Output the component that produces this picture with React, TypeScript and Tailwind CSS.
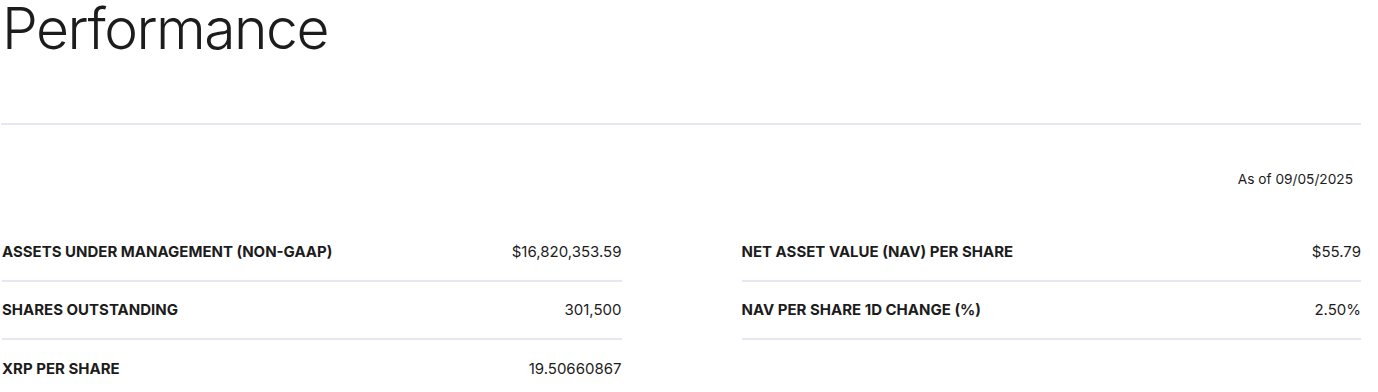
import React from "react";

const left = [
  ["ASSETS UNDER MANAGEMENT (NON-GAAP)", "$16,820,353.59"],
  ["SHARES OUTSTANDING", "301,500"],
  ["XRP PER SHARE", "19.50660867"],
];
const right = [
  ["NET ASSET VALUE (NAV) PER SHARE", "$55.79"],
  ["NAV PER SHARE 1D CHANGE (%)", "2.50%"],
];

function Row({ label, value, last }: { label: string; value: string; last?: boolean }) {
  return (
    <div
      className={
        "flex h-[58px] items-center justify-between " +
        (last ? "" : "border-b-2 border-[#e8e7f1]")
      }
    >
      <span className="text-[15px] font-bold text-[#1c1c1c]">{label}</span>
      <span className="text-[15px] font-normal text-[#1c1c1c]">{value}</span>
    </div>
  );
}

export default function App() {
  return (
    <div
      className="w-[1378px] h-[392px] overflow-hidden bg-white pl-[2px] pr-[17px]"
      style={{ fontFamily: "Inter, 'Noto Sans', sans-serif" }}
    >
      <h1 className="text-[57px] font-light leading-[58px] tracking-[-1.5px] text-[#1c1c1c]">
        Performance
      </h1>
      <div className="mt-[65px] h-[2px] bg-[#e8e7f1] -ml-[1px]" />
      <div className="mt-[44px] flex justify-end pr-[8px] text-[13.7px] leading-[20px] text-[#1c1c1c]">
        As of 09/05/2025
      </div>
      <div className="mt-[35px] grid grid-cols-2 gap-x-[120px]">
        <div className="flex flex-col">
          {left.map((r, i) => (
            <Row key={i} label={r[0]} value={r[1]} last={i === left.length - 1} />
          ))}
        </div>
        <div className="flex flex-col">
          {right.map((r, i) => (
            <Row key={i} label={r[0]} value={r[1]} />
          ))}
        </div>
      </div>
    </div>
  );
}
